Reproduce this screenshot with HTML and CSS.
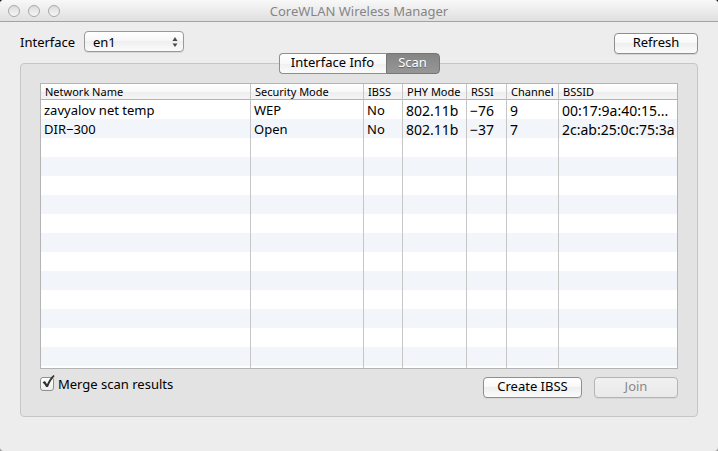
FILE: index.html
```html
<!DOCTYPE html>
<html lang="en">
<head>
<meta charset="utf-8">
<title>CoreWLAN Wireless Manager</title>
<link rel="stylesheet" href="styles.css">
</head>
<body>
<div class="window">
  <header class="titlebar">
    <div class="lights"><i class="light"></i><i class="light"></i><i class="light"></i></div>
    <h1 class="title">CoreWLAN Wireless Manager</h1>
  </header>
  <main class="content">
    <div class="toolbar">
      <label class="toolbar-label" for="interface">Interface</label>
      <div class="popup">
        <select id="interface"><option>en1</option></select>
        <svg class="popup-arrows" width="6" height="10" viewBox="0 0 6 10" fill="#4a4a4a"><path d="M3 0L5.500 4H.5zM3 10L.5 6.500H5.500z"/></svg>
      </div>
      <button class="button refresh" type="button">Refresh</button>
    </div>
    <section class="panel">
      <div class="tabs" role="tablist">
        <button class="tab" type="button" role="tab" aria-selected="false">Interface Info</button>
        <button class="tab selected" type="button" role="tab" aria-selected="true">Scan</button>
      </div>
      <table class="networks">
        <colgroup><col><col class="col-security"><col class="col-ibss"><col class="col-phy"><col class="col-rssi"><col class="col-channel"><col class="col-bssid"></colgroup>
        <thead><tr><th>Network Name</th><th>Security Mode</th><th>IBSS</th><th>PHY Mode</th><th>RSSI</th><th>Channel</th><th>BSSID</th></tr></thead>
        <tbody>
          <tr><td>zavyalov net temp</td><td>WEP</td><td>No</td><td class="num">802.11b</td><td class="num">−76</td><td class="num">9</td><td class="num">00:17:9a:40:15...</td></tr>
          <tr><td>DIR−300</td><td>Open</td><td>No</td><td class="num">802.11b</td><td class="num">−37</td><td class="num">7</td><td class="num">2c:ab:25:0c:75:3a</td></tr>
          <tr><td></td><td></td><td></td><td></td><td></td><td></td><td></td></tr>
          <tr><td></td><td></td><td></td><td></td><td></td><td></td><td></td></tr>
          <tr><td></td><td></td><td></td><td></td><td></td><td></td><td></td></tr>
          <tr><td></td><td></td><td></td><td></td><td></td><td></td><td></td></tr>
          <tr><td></td><td></td><td></td><td></td><td></td><td></td><td></td></tr>
          <tr><td></td><td></td><td></td><td></td><td></td><td></td><td></td></tr>
          <tr><td></td><td></td><td></td><td></td><td></td><td></td><td></td></tr>
          <tr><td></td><td></td><td></td><td></td><td></td><td></td><td></td></tr>
          <tr><td></td><td></td><td></td><td></td><td></td><td></td><td></td></tr>
          <tr><td></td><td></td><td></td><td></td><td></td><td></td><td></td></tr>
          <tr><td></td><td></td><td></td><td></td><td></td><td></td><td></td></tr>
          <tr><td></td><td></td><td></td><td></td><td></td><td></td><td></td></tr>
          <tr class="rest"><td></td><td></td><td></td><td></td><td></td><td></td><td></td></tr>
        </tbody>
      </table>
      <div class="actions">
        <label class="check">
          <span class="check-box">
            <input type="checkbox" checked>
            <svg class="check-mark" width="14" height="14" viewBox="0 0 14 14" fill="#333"><path d="M1.500 7.200L4 6L6 9.200C7.500 5.800 9.600 2.600 12.400 0L13.600 1C10.800 4.200 8.800 7.600 7 12H5.200C4.200 10.200 3 8.500 1.500 7.200z"/></svg>
          </span>
          Merge scan results
        </label>
        <button class="button create" type="button">Create IBSS</button>
        <button class="button join" type="button" disabled>Join</button>
      </div>
    </section>
  </main>
</div>
</body>
</html>
```
FILE: styles.css
```css
* { box-sizing: border-box; }

body {
  margin: 0;
  background: linear-gradient(#222 50%, #999 50%);
  color: #000;
  font: 13px/18px "Noto Sans", "Open Sans", sans-serif;
}

.window {
  min-height: 100vh;
  border-radius: 4px;
  background: #ededed;
  overflow: hidden;
}

.titlebar {
  display: grid;
  grid-template-columns: 1fr auto 1fr;
  align-items: center;
  height: 22px;
  padding: 0 8px;
  border-bottom: 1px solid #a3a3a3;
  background: linear-gradient(#f8f8f8, #e0e0e0);
}

.lights { display: flex; gap: 8px; }

.light {
  width: 12px;
  height: 12px;
  border: 1px solid #a9a9a9;
  border-radius: 50%;
  background: linear-gradient(#dcdcdc, #f6f6f6);
}

.title {
  margin: 0;
  color: #858585;
  font-size: 13px;
  font-weight: 400;
  line-height: 20px;
}

.content { padding: 9px 20px 34px; }

.toolbar {
  display: flex;
  align-items: flex-start;
  height: 32px;
}

.toolbar-label { margin: 2px 8px 0 0; width: 56px; }

.popup { position: relative; width: 100px; }

.popup select {
  appearance: none;
  display: block;
  width: 100%;
  height: 21px;
  padding: 0 8px;
  border: 1px solid #999;
  border-radius: 4px;
  background: linear-gradient(#fff, #f6f6f6 50%, #efefef 50%, #fbfbfb);
  box-shadow: 0 1px 0 #d8d8d8;
  color: #000;
  font: inherit;
}

.popup-arrows {
  position: absolute;
  top: 6px;
  right: 6px;
  pointer-events: none;
}

.button,
.tab {
  height: 21px;
  padding: 0 0 2px;
  border: 1px solid #8f8f8f;
  border-radius: 4px;
  background: linear-gradient(#fff, #f8f8f8 50%, #efefef 50%, #fbfbfb);
  color: #000;
  font: inherit;
  line-height: 17px;
}

.button { width: 84px; box-shadow: 0 1px 0 #d6d6d6; }

.refresh { margin: 2px 0 0 auto; }

.panel {
  padding: 0 19px 18px;
  border: 1px solid #c6c6c6;
  border-radius: 4px;
  background: #e3e3e3;
}

.tabs {
  display: flex;
  justify-content: center;
  margin: -11px 0 9px;
}

.tab { width: 107px; border-radius: 4px 0 0 4px; border-right: 0; }

.tab.selected {
  width: 54px;
  border: 1px solid #757575;
  border-radius: 0 4px 4px 0;
  background: linear-gradient(#858585, #969696);
  color: #fff;
  text-shadow: 0 1px 0 #666;
}

.networks {
  width: 100%;
  border: 1px solid #b4b4b4;
  border-spacing: 0;
  table-layout: fixed;
  background: #fff;
}

.col-security { width: 113px; }
.col-ibss { width: 39px; }
.col-phy { width: 64px; }
.col-rssi { width: 40px; }
.col-channel { width: 52px; }
.col-bssid { width: 118px; }

.networks th,
.networks td {
  padding: 0 0 0 3px;
  border-right: 1px solid #c6c6c6;
  overflow: hidden;
  text-align: left;
  white-space: nowrap;
}

.networks th {
  height: 16px;
  padding-left: 4px;
  border-bottom: 1px solid #b4b4b4;
  background: linear-gradient(#fff, #f8f8f8 50%, #eee 50%, #f4f4f4);
  font-size: 11px;
  font-weight: 400;
  line-height: 15px;
}

.networks td { height: 19px; padding-top: 2px; line-height: 17px; }

.networks .num { font-size: 14px; }

.networks th:last-child,
.networks td:last-child { border-right: 0; }

.networks tbody tr:nth-child(even) { background: #f2f6fb; }

.networks .rest td { height: 2px; }

.actions {
  display: flex;
  align-items: flex-start;
  margin-top: 8px;
}

.check {
  display: flex;
  gap: 4px;
  margin-right: auto;
  line-height: 14px;
}

.check-box { position: relative; width: 14px; height: 14px; }

.check-box input {
  appearance: none;
  display: block;
  width: 14px;
  height: 14px;
  margin: 0;
  border: 1px solid #8f8f8f;
  border-radius: 3px;
  background: linear-gradient(#fff, #eee);
}

.check-mark {
  position: absolute;
  top: -2px;
  left: 1px;
  pointer-events: none;
}

.create { width: 99px; margin-right: 12px; }

.button:disabled {
  border-color: #b4b4b4;
  background: linear-gradient(#f1f1f1, #e9e9e9);
  color: #888;
}
```
